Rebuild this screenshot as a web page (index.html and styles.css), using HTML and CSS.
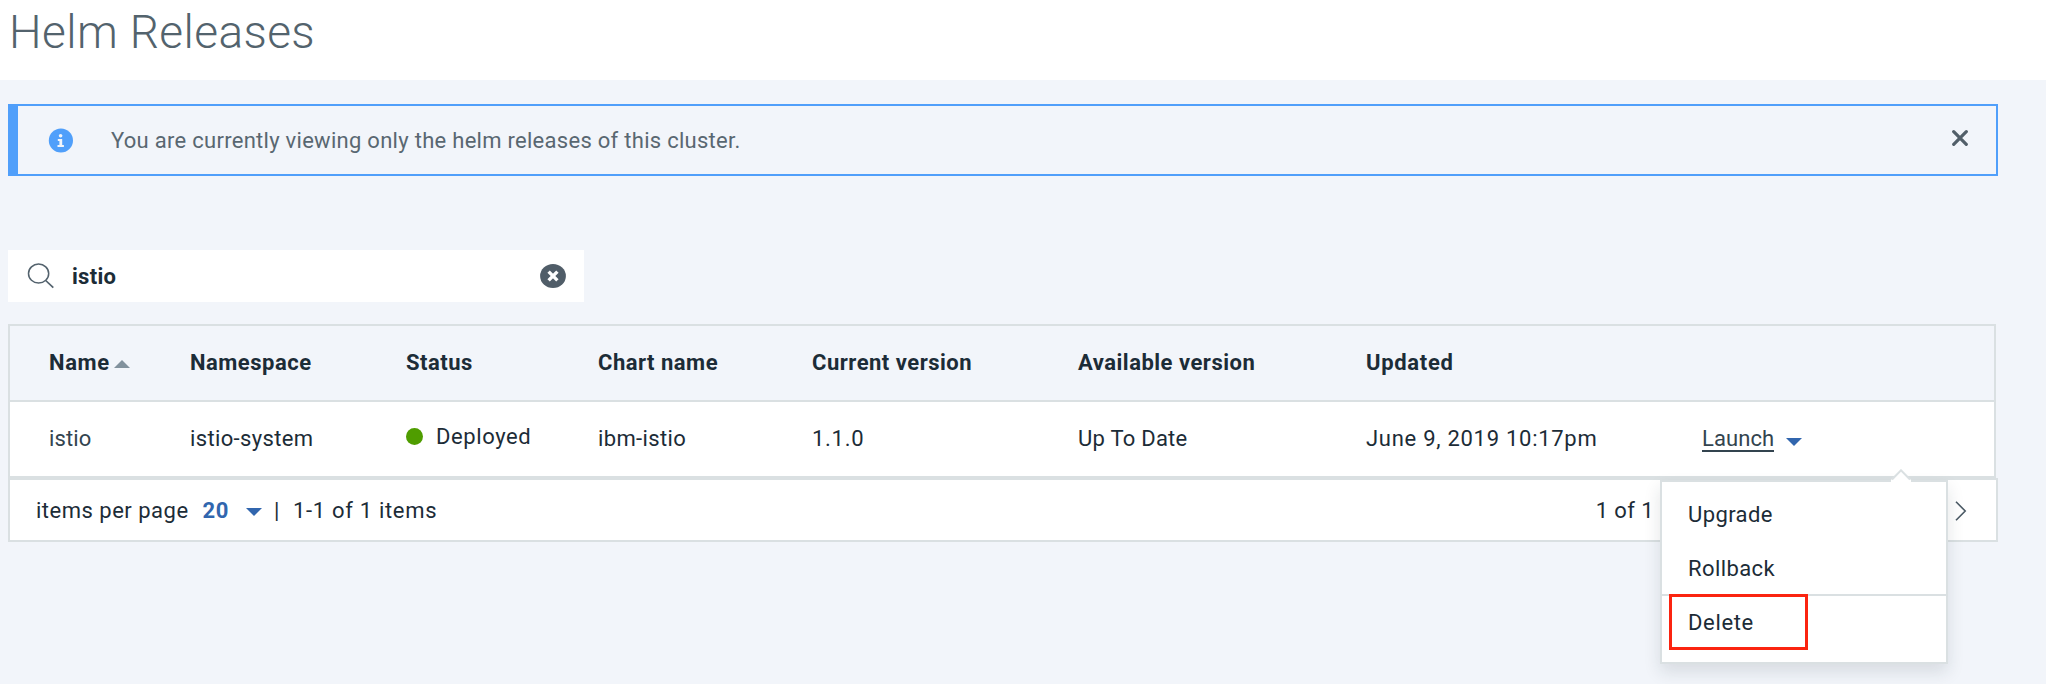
FILE: index.html
```html
<!DOCTYPE html>
<html lang="en">
<head>
<meta charset="utf-8">
<title>Helm Releases</title>
<link rel="stylesheet" href="styles.css">
</head>
<body>
<header class="page-header"><h1 class="title">Helm Releases</h1></header>
<main class="content">
  <section class="notice">
    <svg class="notice-icon" width="25" height="25" viewBox="0 0 25 25"><circle cx="12.9" cy="12.5" r="12.1" fill="#509ffa"/><circle cx="12.6" cy="7.8" r="1.8" fill="#f2f5fa"/><path d="M9.8 11h4.4v6h1.7v1.9H9.5V17h1.9v-4.1H9.8z" fill="#f2f5fa"/></svg>
    <p class="notice-text">You are currently viewing only the helm releases of this cluster.</p>
    <svg class="notice-close" width="16" height="16" viewBox="0 0 16 16"><path d="M1.7 1.7l12.6 12.6M14.3 1.7L1.7 14.3" stroke="#525f69" stroke-width="3.2" stroke-linecap="round"/></svg>
  </section>
  <div class="search">
    <svg class="search-icon" width="28" height="26" viewBox="0 0 28 26"><ellipse cx="11.6" cy="10.6" rx="10.1" ry="9.5" fill="none" stroke="#53626d" stroke-width="1.5"/><path d="M18.7 17.5l7.6 7.2" stroke="#53626d" stroke-width="1.7"/></svg>
    <span class="search-value">istio</span>
    <svg class="search-clear" width="26" height="26" viewBox="0 0 26 26"><ellipse cx="13" cy="13" rx="12.9" ry="12.1" fill="#505d68"/><path d="M8.6 8.6l8.8 8.8M17.4 8.6l-8.8 8.8" stroke="#fff" stroke-width="3.4"/></svg>
  </div>
  <div class="table">
    <div class="row head">
      <div class="cell"><span class="t-name">Name</span><svg class="sort" width="16" height="8" viewBox="0 0 16 8"><path d="M0 8L8 0l8 8z" fill="#82929d"/></svg></div>
      <div class="cell">Namespace</div>
      <div class="cell">Status</div>
      <div class="cell">Chart name</div>
      <div class="cell">Current version</div>
      <div class="cell">Available version</div>
      <div class="cell t-updated">Updated</div>
      <div class="cell"></div>
    </div>
    <div class="row body">
      <div class="cell link t-istio">istio</div>
      <div class="cell">istio-system</div>
      <div class="cell status"><span class="dot"></span><span class="t-deployed">Deployed</span></div>
      <div class="cell">ibm-istio</div>
      <div class="cell t-num">1.1.0</div>
      <div class="cell t-uptodate">Up To Date</div>
      <div class="cell t-date">June 9, 2019 10:17pm</div>
      <div class="cell"><span class="launch">Launch</span><svg class="launch-caret" width="16" height="8" viewBox="0 0 16 8"><path d="M0 0h16L8 8z" fill="#3166ae"/></svg></div>
    </div>
  </div>
  <div class="pagination">
    <span class="t-per">items per page</span>
    <span class="page-size">20</span>
    <svg class="size-caret" width="16" height="8" viewBox="0 0 16 8"><path d="M0 0h16L8 8z" fill="#3166ae"/></svg>
    <span class="t-bar">|</span>
    <span class="t-range">1-1 of 1 items</span>
    <span class="t-page">1 of 1</span>
    <svg class="next" width="12" height="20" viewBox="0 0 12 20"><path d="M1 .8L10.2 10 1 19.2" fill="none" stroke="#4b5a65" stroke-width="1.6"/></svg>
  </div>
  <div class="menu">
    <svg class="pointer" width="20" height="13" viewBox="0 0 20 13"><path d="M0 11L10 1l10 10v2H0z" fill="#fff"/><path d="M1 10.5L10 1.3l9 9.2" fill="none" stroke="#dae0e2" stroke-width="2"/></svg>
    <div class="item">Upgrade</div>
    <div class="item">Rollback</div>
    <div class="item delete"><span class="t-delete">Delete</span><span class="highlight"></span></div>
  </div>
</main>
</body>
</html>
```
FILE: styles.css
```css
* { box-sizing: border-box; }
body { margin: 0; width: 2046px; height: 684px; overflow: hidden; background: #f2f5fa; color: #1c2c37; font: 400 22px/30px Roboto, "Liberation Sans", sans-serif; white-space: nowrap; }
.page-header { height: 80px; background: #fff; padding: 4px 0 0 9px; }
.title { margin: 0; font-size: 46px; line-height: 57px; font-weight: 300; color: #53636d; letter-spacing: 0.4px; }
.content { position: relative; padding: 24px 0 0 8px; }
.notice { width: 1990px; height: 72px; border: 2px solid #509ffa; border-left-width: 10px; display: flex; align-items: center; padding: 0 28px 0 30px; color: #596771; }
.notice-text { margin: 0 auto 0 38px; padding-top: 1px; letter-spacing: 0.28px; }
.notice-close { margin-top: -4px; }
.search { width: 576px; height: 52px; margin-top: 74px; background: #fff; display: flex; align-items: center; padding: 0 18px 0 19px; }
.search-value { margin: 0 auto 0 17px; padding-top: 1px; font-weight: 700; letter-spacing: 0.3px; }
.table { width: 1988px; margin-top: 22px; border: 2px solid #dae0e2; border-bottom: 0; }
.row { display: grid; grid-template-columns: 141px 216px 192px 214px 266px 288px 336px 1fr; padding-left: 39px; align-items: center; }
.head { height: 76px; font-weight: 700; border-bottom: 2px solid #dae0e2; letter-spacing: 0.5px; }
.body { height: 76px; border-bottom: 2px solid #dae0e2; background: #fff; letter-spacing: 0.36px; }
.t-name { letter-spacing: 0.65px; }
.t-updated { letter-spacing: 0.7px; }
.sort { margin-left: 4px; position: relative; top: -2px; }
.link { color: #33444f; }
.t-istio { letter-spacing: 0.1px; }
.t-num { letter-spacing: 0.7px; }
.t-uptodate { letter-spacing: 0.25px; }
.t-date { letter-spacing: 0.72px; }
.status { display: flex; align-items: center; padding-bottom: 4px; }
.dot { width: 17px; height: 17px; border-radius: 50%; background: #4f9d00; margin: -1px 13px 0 0; }
.t-deployed { letter-spacing: 0.6px; }
.launch { color: #33444f; display: inline-block; height: 28px; line-height: 30px; border-bottom: 2px solid #33444f; letter-spacing: 0.1px; }
.launch-caret { margin-left: 12px; }
.pagination { width: 1990px; height: 64px; background: #fff; border: 2px solid #dae0e2; display: flex; align-items: center; padding: 1px 29px 0 26px; }
.t-per { letter-spacing: 0.5px; }
.page-size { margin-left: 14px; color: #3166ae; font-weight: 700; letter-spacing: 0.6px; }
.size-caret { margin: 2px 0 0 17px; }
.t-bar { width: 6px; margin: 0 13px 0 12px; }
.t-range { letter-spacing: 0.68px; }
.t-page { margin: 0 301px 0 auto; letter-spacing: 0.4px; }
.menu { position: absolute; left: 1660px; top: 400px; width: 288px; height: 184px; background: #fff; border: 2px solid #dae0e2; box-shadow: 0 8px 16px rgba(21, 41, 53, .12); padding-top: 4px; letter-spacing: 0.4px; }
.item { height: 54px; line-height: 58px; padding-left: 26px; }
.pointer { position: absolute; left: 229px; top: -13px; }
.delete { position: relative; line-height: 54px; border-top: 2px solid #dae0e2; }
.t-delete { letter-spacing: 0.65px; }
.highlight { position: absolute; left: 7px; top: -2px; width: 139px; height: 56px; border: 3px solid #fb2410; }
```
